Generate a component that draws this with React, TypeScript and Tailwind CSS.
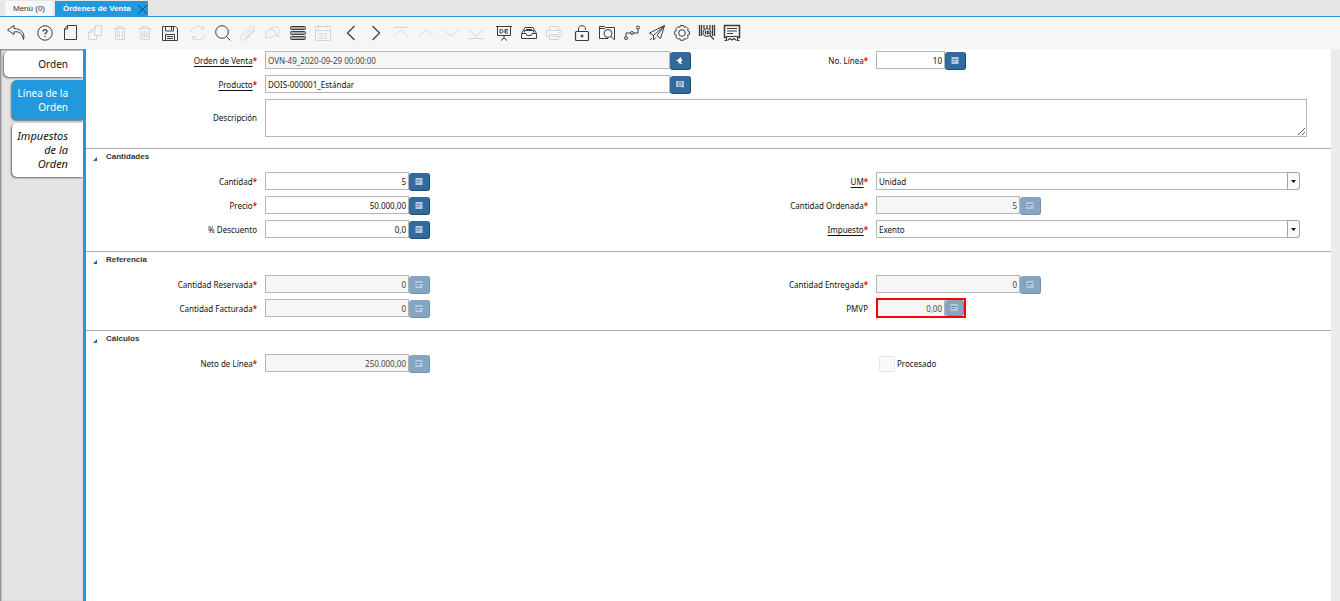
import { useState, type ReactNode } from 'react';
import clsx from 'clsx';

type Tool = { name: string; icon: ReactNode; off?: boolean };

const toolGroups: Tool[][] = [
  [{ name: 'Deshacer', icon: <path d="M6 1.500-.5 6 6 10.500V8c5-1 8 1 9.500 7.500C17.500 9 12.500 4.500 6 4.500z" /> }],
  [
    { name: 'Ayuda', icon: <><circle cx="9" cy="9" r="7.2" /><path d="M7 7.5C7 5 11 5 11 7.3c0 1.5-2 1.5-2 3.2M9 12v1" strokeWidth="1.3" /></> },
    { name: 'Nuevo', icon: <path d="M6.500 1.500h9v14h-12V5zM6.500 1.500V5H3.500" /> },
    { name: 'Copiar', off: true, icon: <><path d="M9.500 1.500h6v10h-7v-7zM9.500 1.500v3h-2" /><path d="M7.500 5.500h-2l-3 3v7h8v-4M5.500 5.500v3h-3" /></> },
    { name: 'Eliminar', off: true, icon: <path d="M3 4.500h12M6.500 4V2.500h5V4M4.500 5v10.500h9V5M6.500 7v6.500M8.500 7v6.500M11.500 7v6.500" /> },
    { name: 'Eliminar varios', off: true, icon: <path d="M3 4.500h12M6.500 4V2.500h5V4M4 5l1 10.500h8L14 5M6.500 7l.5 6.500M8.500 7v6.500M11.500 7l-.5 6.500" /> },
    { name: 'Guardar', icon: <><path d="M1.500 2.500h13l2 2v12h-15z" /><path d="M4.500 3v4h8V3M10.500 3v3M4.500 16v-5.500h9V16M6 12.500h6M6 14.500h6" /></> },
  ],
  [
    { name: 'Refrescar', off: true, icon: <path d="M2 8C3 2 11 0 14.500 5V2M14.500 5.500H11M16 10c-1 6-9 8-12.500 3v3M3.500 12.500H7" /> },
    { name: 'Buscar', icon: <><circle cx="8" cy="8" r="6.300" /><path d="m12.500 12.500 4 4" /></> },
    { name: 'Adjuntos', off: true, icon: <path d="M12 5 6 11.500c-1 1.500 1 2.500 2 1.500l6.500-7c2-3-1-5-3.500-3L3 10.500C0 14.500 4 18 7.500 15l8-8.500" /> },
    { name: 'Chat', off: true, icon: <><path d="M6 5.500C7 2 15 1.500 16 6.500c0 2-1 3-2 4l.5 2-2.500-1" /><path d="M7 5.500c6 0 7 7 0 8-1 0-2 0-2.500-.5L2 14l.5-2.500C0 9 3 5.500 7 5.500z" /></> },
    { name: 'Vista', icon: <><rect x="1.500" y="2.500" width="15" height="3" rx="1" fill="#aaa" /><rect x="1.500" y="7.500" width="15" height="3" rx="1" fill="#aaa" /><rect x="1.500" y="12.500" width="15" height="3" rx="1" fill="#aaa" /></> },
    { name: 'Calendario', off: true, icon: <><path d="M1.500 2.500h15v14h-15zM2 6.500h14M4.500 1v3M13.500 1v3" /><text x="9" y="15" fontSize="9" textAnchor="middle" fill="currentColor" stroke="none" className="font-['Liberation_Sans']">31</text></> },
  ],
  [
    { name: 'Anterior', icon: <path d="m12.500 2-7 7 7 7" strokeWidth="1.200" /> },
    { name: 'Siguiente', icon: <path d="m5.500 2 7 7-7 7" strokeWidth="1.200" /> },
    { name: 'Primero', off: true, icon: <path d="M1.500 3.500h15M2 12.500l7-7 7 7" /> },
    { name: 'Previo', off: true, icon: <path d="m2 12.500 7-7 7 7" /> },
    { name: 'Próximo', off: true, icon: <path d="m2 5.500 7 7 7-7" /> },
    { name: 'Último', off: true, icon: <path d="m2 5.500 7 7 7-7M1.500 14.500h15" /> },
  ],
  [
    { name: 'Informe', icon: <path d="M1 2.500h16M2.500 3v8.500h13V3M9 12v2M6 16.500l3-2.500 3 2.500M5 5.500h1.500c2 0 2 3.500 0 3.500H5zM13 5.500h-3V9h3M10 7.200h2.500" /> },
    { name: 'Archivo', icon: <><path d="M1.500 9.500 5 3.500h8l3.500 6v5h-15zM2 9.500h4l1 2h4l1-2h4" /><path d="M4.500 8.500v-2h9v2M6 5.500h6" /></> },
    { name: 'Imprimir', off: true, icon: <><path d="M4.500 6V2.500h9V6M4 12.500H1.500v-6h15v6H14M4.500 10.500h9v5h-9zM6 12.500h6M13 8.500h1.500" /></> },
  ],
  [
    { name: 'Bloquear', icon: <><rect x="2.500" y="7.500" width="13" height="9" rx="1" strokeWidth="1.200" /><path d="M5.500 7V5c0-4.500 7-4.500 7 0v1" /><circle cx="9" cy="12" r="1" fill="currentColor" /></> },
    { name: 'Zoom', icon: <><path d="M10 14.500H1.500v-12h5l1 1h9v12" /><path d="M2 4.500h5" /><circle cx="10" cy="9.500" r="4" /><path d="m13 12.500 3.500 3.500" /></> },
    { name: 'Flujo', icon: <><circle cx="3" cy="14" r="1.500" /><circle cx="9" cy="9" r="1.500" /><circle cx="15" cy="3.500" r="1.500" /><path d="M3 12.500V9h4.500M10.500 9H15V5" /></> },
    { name: 'Solicitudes', icon: <path d="M16.500 1.500 1.500 9l4 2.500 11-10-4 13-3.500-3 7.500-10M5.500 11.500v4.500L8 13.500M2 16l2-2" /> },
    { name: 'Proceso', icon: <><path d="m7.500 1.500 3 0 .7 1.800 1.900-.7 2.100 2.100-.7 1.900 1.900.8v3l-1.900.8.7 1.900-2.100 2.100-1.900-.7-.7 1.800h-3l-.7-1.800-1.900.7-2.100-2.100.7-1.900-1.900-.8v-3l1.900-.8-.7-1.900 2.100-2.100 1.900.7z" /><circle cx="9" cy="9" r="3.300" /></> },
    { name: 'Producto', icon: <><path d="M1.500 1v11M3.500 1v11M6 1v4M9 1v3M12 1v4M14.500 1v11M16.500 1v11" strokeWidth="1.300" /><circle cx="9" cy="8.500" r="4" /><path d="M7.500 6.500v4M9.500 6.500v4M11 7v3M12 11.500l4 4" strokeWidth="1.300" /></> },
    { name: 'Factura', icon: <><path d="M4 13.500H1.500v-12h15v12H14" strokeWidth="1.500" /><path d="M4 4.500h10M4 7h10M4 9.500h6M3.500 16.500v-4h11v4M5 16l2-1.500L9 16l2-1.500 2 1.500M1.500 16.500h3M13.500 16.500h3" strokeWidth="1.200" /></> },
  ],
];

function Toolbar() {
  return (
    <div role="toolbar" className="flex h-8 items-center gap-[3px] bg-[#f6f6f6] pl-1">
      {toolGroups.map((group, i) => (
        <div key={i} className="flex">
          {group.map((tool) => (
            <button key={tool.name} type="button" aria-label={tool.name} disabled={tool.off} className={clsx('flex h-6 w-[25px] items-center justify-center', tool.off ? 'text-[#d4d4d4]' : 'text-[#3c3c3c]')}>
              <svg viewBox="0 0 18 18" className="size-[18px] overflow-visible" fill="none" stroke="currentColor" strokeWidth="1">{tool.icon}</svg>
            </button>
          ))}
        </div>
      ))}
    </div>
  );
}

const glyphs = {
  calc: <><path d="M.5 0h7v7h-7z" fill="#b5cade" /><path d="M1.500 2.500h5M1.500 4.500h3" stroke="#6088b0" /></>,
  zoom: <path d="M5 0 0 4h2c0 2 1.500 3 4.500 3C5 6 5 5 5.200 4H7L5.500 2.500z" fill="#fff" />,
  product: <><path d="M0 0h8v6H0z" fill="#a9c2d8" /><circle cx="4" cy="3" r="1.700" fill="none" stroke="#5583ad" /><path d="m5 4.500 2 2" stroke="#dde8f2" /></>,
};

type SideButtonProps = { glyph?: keyof typeof glyphs; label: string; disabled?: boolean; inset?: boolean };

function SideButton({ glyph = 'calc', label, disabled, inset }: SideButtonProps) {
  return (
    <button type="button" aria-label={label} disabled={disabled} className={clsx('flex shrink-0 items-center justify-center rounded-[3px] border-r border-b', inset ? 'h-4 w-[19px]' : 'mt-px h-[18px] w-[21px]', disabled ? 'border-[#6d93b5] bg-[#85a5c3]' : 'border-[#1d4d79] bg-[#336a9c]')}>
      <svg viewBox="0 0 8 7" className="h-[7px] w-2">{glyphs[glyph]}</svg>
    </button>
  );
}

function Label({ id, text, required, link }: { id: string; text: string; required?: boolean; link?: boolean }) {
  return (
    <label htmlFor={id} className="h-5 pr-2 text-right leading-5 whitespace-nowrap">
      <span className={clsx(link && 'underline underline-offset-2')}>{text}</span>
      {required && <span className="font-bold text-[#f00]">*</span>}
    </label>
  );
}

const box = 'min-w-0 border-[#b5b5b5] px-0.5 pt-px outline-none';
const fullBox = 'h-[18px] border';

type NumProps = { id: string; label: string; value: string; required?: boolean; disabled?: boolean; short?: boolean; alert?: boolean };

function NumberField({ id, label, value, required, disabled, short, alert }: NumProps) {
  return (
    <>
      <Label id={id} text={label} required={required} />
      <div className="flex items-start">
        <div className={clsx('flex', short ? 'w-[90px]' : 'w-[165px]', alert && '-my-px h-5 border-2 border-[#f00]')}>
          <input id={id} defaultValue={value} readOnly={disabled} className={clsx(box, 'flex-1 text-right', disabled && 'bg-[#f6f6f6] text-[#444]', alert ? 'h-4 border-r' : fullBox)} />
          <SideButton label={`Calculadora ${label}`} disabled={disabled} inset={alert} />
        </div>
      </div>
    </>
  );
}

function SelectField({ id, label, value }: { id: string; label: string; value: string }) {
  return (
    <>
      <Label id={id} text={label} required link />
      <div className="pr-[31px]">
        <div className="relative">
          <select id={id} defaultValue={value} className={clsx(box, fullBox, 'block w-full appearance-none rounded-r-[3px] bg-white')}>
            <option>{value}</option>
          </select>
          <span className="pointer-events-none absolute inset-y-0 right-0 flex w-[13px] items-center justify-center rounded-r-[3px] border border-[#a5a5a5] bg-[#f8f8f8]">
            <svg viewBox="0 0 5 3" className="h-[3px] w-[5px]"><path d="M0 0h5L2.500 3z" fill="#111" /></svg>
          </span>
        </div>
      </div>
    </>
  );
}

function Row({ children }: { children: ReactNode }) {
  return <div className="grid min-h-6 grid-cols-[179fr_426fr_185fr_455fr] items-start pt-0.5">{children}</div>;
}

function Section({ title, children }: { title: string; children: ReactNode }) {
  const [open, setOpen] = useState(true);
  return (
    <section className="mt-[9px] border-t border-[#aaa]">
      <button type="button" aria-expanded={open} onClick={() => setOpen(!open)} className="flex h-[21px] items-start gap-[9px] pl-[7px] font-['Liberation_Sans',sans-serif] text-[8px] font-bold text-[#333]">
        <svg viewBox="0 0 4 4" className="mt-2 size-1"><path d="M4 0v4H0z" fill="#1565c0" /></svg>
        <span className="leading-4">{title}</span>
      </button>
      {open && children}
    </section>
  );
}

const sideTab = 'block w-full rounded-l-[5px] pr-[15px] text-right leading-[14px] shadow-[-1px_1px_2px_#666]';

export default function App() {
  return (
    <div className="flex min-h-screen flex-col bg-white font-['Noto_Sans',sans-serif] text-[8px] text-[#111]">
      <header>
        <nav className="flex h-[17px] items-end gap-0.5 border-b border-[#2199dc] bg-[#e6e6e6] pl-[5px] font-['Liberation_Sans',sans-serif]">
          <button type="button" className="h-[15px] w-12 bg-[#f7f7f7] text-[#333]">Menú (0)</button>
          <div className="flex h-[15px] items-center bg-[#2199dc] pl-2 text-white">
            <button type="button" className="font-bold">Órdenes de Venta</button>
            <button type="button" aria-label="Cerrar" className="ml-1.5 pt-0.5">
              <svg viewBox="0 0 11 11" className="size-[11px]" stroke="#173f5c"><path d="m1 1 9 9M10 1l-9 9" /></svg>
            </button>
          </div>
        </nav>
        <Toolbar />
      </header>
      <div className="flex flex-1">
        <aside className="w-[86px] shrink-0 border-r-[3px] border-[#2199dc] bg-[#e4e4e4] shadow-[inset_1px_1px_2px_#777]">
          <div className="flex flex-col gap-[3px] overflow-hidden pt-0.5 pb-1 pl-1">
            <button type="button" className={clsx(sideTab, 'h-[26px] bg-white text-[10px]')}>Orden</button>
            <div className="flex flex-col gap-[3px] pl-2">
              <button type="button" className={clsx(sideTab, 'h-10 bg-[#2199dc] pl-1 text-[10px] text-white')}>Línea de la Orden</button>
              <button type="button" className={clsx(sideTab, 'h-[54px] bg-white pl-1 text-[11px] italic')}>Impuestos de la Orden</button>
            </div>
          </div>
        </aside>
        <main className="min-w-0 flex-1">
          <form>
            <Row>
              <Label id="order" text="Orden de Venta" required link />
              <div className="flex">
                <input id="order" defaultValue="OVN-49_2020-09-29 00:00:00" readOnly className={clsx(box, fullBox, 'flex-1 bg-[#f6f6f6] text-[#444]')} />
                <SideButton glyph="zoom" label="Abrir orden" />
              </div>
              <NumberField id="line" label="No. Línea" value="10" required short />
            </Row>
            <Row>
              <Label id="product" text="Producto" required link />
              <div className="flex">
                <input id="product" defaultValue="DOIS-000001_Estándar" className={clsx(box, fullBox, 'flex-1')} />
                <SideButton glyph="product" label="Buscar producto" />
              </div>
            </Row>
            <Row>
              <div className="flex h-10 flex-col pt-[9px]"><Label id="description" text="Descripción" /></div>
              <div className="col-span-3 pr-6">
                <textarea id="description" className="block h-[38px] w-full border border-[#b5b5b5] px-0.5 outline-none" />
              </div>
            </Row>
            <Section title="Cantidades">
              <Row>
                <NumberField id="qty" label="Cantidad" value="5" required />
                <SelectField id="uom" label="UM" value="Unidad" />
              </Row>
              <Row>
                <NumberField id="price" label="Precio" value="50.000,00" required />
                <NumberField id="ordered" label="Cantidad Ordenada" value="5" required disabled />
              </Row>
              <Row>
                <NumberField id="discount" label="% Descuento" value="0,0" />
                <SelectField id="tax" label="Impuesto" value="Exento" />
              </Row>
            </Section>
            <Section title="Referencia">
              <Row>
                <NumberField id="reserved" label="Cantidad Reservada" value="0" required disabled />
                <NumberField id="delivered" label="Cantidad Entregada" value="0" required disabled />
              </Row>
              <Row>
                <NumberField id="invoiced" label="Cantidad Facturada" value="0" required disabled />
                <NumberField id="pmvp" label="PMVP" value="0,00" disabled short alert />
              </Row>
            </Section>
            <Section title="Cálculos">
              <Row>
                <NumberField id="net" label="Neto de Línea" value="250.000,00" required disabled />
                <span />
                <div className="flex h-5 items-center gap-0.5 pl-[3px]">
                  <input id="processed" type="checkbox" disabled className="size-4 appearance-none rounded-[2px] border border-[#e6e6e6] bg-[#fafafa]" />
                  <label htmlFor="processed">Procesado</label>
                </div>
              </Row>
            </Section>
          </form>
        </main>
        <div className="w-[9px] shrink-0 bg-[#ebebeb]" />
      </div>
    </div>
  );
}
